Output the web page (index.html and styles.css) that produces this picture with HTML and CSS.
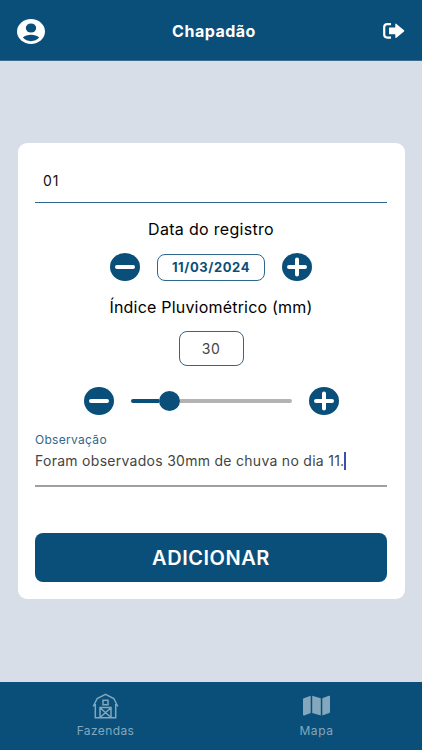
FILE: index.html
```
<!DOCTYPE html>
<html lang="pt-BR">
<head>
    <meta charset="UTF-8">
    <meta name="viewport" content="width=device-width, initial-scale=1.0">
    <title>Chapadão</title>
    <link rel="stylesheet" href="styles.css">
</head>
<body>
    <header class="header">
      <svg class="user" viewBox="0 0 27 25" preserveAspectRatio="none">
        <ellipse cx="13.5" cy="12.5" rx="13.5" ry="12.5" fill="#fff"/>
        <ellipse cx="13.5" cy="9" rx="5" ry="4.6" fill="#0a4f79"/>
        <path d="M5.6 18.6C7.6 16.6 10.5 15.7 13.5 15.7s5.9.9 7.9 2.9C19.5 20.9 16.6 22.2 13.5 22.2S7.5 20.9 5.6 18.6z" fill="#0a4f79"/>
      </svg>
      <h1 class="title">Chapadão</h1>
      <svg class="exit" viewBox="0 0 22 16">
        <path d="M8 1.1H4.2Q1.200 1.100 1.200 4.100V11.600Q1.200 14.600 4.200 14.600H8" fill="none" stroke="#fff" stroke-width="2.200"/>
        <path d="M6 5.200Q6 4.500 6.700 4.500H12.300V1.300Q12.300 0 13.400.9L21 7.200Q21.700 7.800 21 8.400L13.400 14.800Q12.300 15.600 12.300 14.300V11.200H6.700Q6 11.200 6 10.500z" fill="#fff"/>
      </svg>
    </header>

    <main class="main">
      <form class="card">
        <div class="talhao"><span>01</span></div>

        <div class="label"><span class="label-date">Data do registro</span></div>
        <div class="row row-date">
          <button type="button" class="round" aria-label="Menos">
            <svg viewBox="0 0 30 28"><path d="M7 14H23" stroke="#fff" stroke-width="4" stroke-linecap="round"/></svg>
          </button>
          <div class="date"><span>11/03/2024</span></div>
          <button type="button" class="round" aria-label="Mais">
            <svg viewBox="0 0 30 28"><path d="M7 14H23M15 6.500V21.500" stroke="#fff" stroke-width="4" stroke-linecap="round"/></svg>
          </button>
        </div>

        <div class="label"><span class="label-index">Índice Pluviométrico (mm)</span></div>
        <div class="amount"><span>30</span></div>
        <div class="row row-slider">
          <button type="button" class="round" aria-label="Menos">
            <svg viewBox="0 0 30 28"><path d="M7 14H23" stroke="#fff" stroke-width="4" stroke-linecap="round"/></svg>
          </button>
          <div class="slider">
            <div class="track-on"></div>
            <div class="thumb"></div>
            <div class="track-off"></div>
          </div>
          <button type="button" class="round" aria-label="Mais">
            <svg viewBox="0 0 30 28"><path d="M7 14H23M15 6.500V21.500" stroke="#fff" stroke-width="4" stroke-linecap="round"/></svg>
          </button>
        </div>

        <div class="obs">
          <div class="obs-label">Observação</div>
          <div class="obs-value"><span class="obs-text">Foram observados 30mm de chuva no dia 11.</span><i class="caret"></i></div>
        </div>

        <button type="button" class="submit"><span>ADICIONAR</span></button>
      </form>
    </main>

    <nav class="tabs">
      <div class="tab">
        <svg viewBox="0 0 27 26" width="27" height="26" fill="none" stroke="#83a7bd">
          <path d="M1.200 13.500L5.200 5.500L13.500 1.300L21.800 5.500L25.800 13.500M3.300 11V24.700H23.700V11" stroke-width="1.500"/>
          <path d="M11 7.300H16V11.700H11zM8 24.500V14.500H19V24.500M8 14.800L19 24.500M19 14.800L8 24.500" stroke-width="1.500"/>
        </svg>
        <span class="tab-farms">Fazendas</span>
      </div>
      <div class="tab">
        <svg viewBox="0 0 27 26" width="27" height="26" fill="#83a7bd">
          <path d="M0 6.200Q0 5.500.7 5.200L7.700 2.700V20L1.200 22.400Q0 22.800 0 21.700zM9.200 2.700L17.800 5.300V22.500L9.200 20zM19.300 5.200L25.800 2.800Q27 2.400 27 3.500V19Q27 19.700 26.300 20L19.300 22.500z"/>
        </svg>
        <span class="tab-map">Mapa</span>
      </div>
    </nav>
</body>
</html>
```

FILE: styles.css
```
* {
  box-sizing: border-box;
}
body {
  margin: 0;
  height: 750px;
  display: flex;
  flex-direction: column;
  background: #d8dee7;
  font-family: Inter, "Liberation Sans", sans-serif;
  color: #111;
}
svg {
  display: block;
}
span {
  white-space: nowrap;
}
button {
  border: none;
  padding: 0;
  font-family: inherit;
}

/* header */
.header {
  height: 61px;
  padding: 2px 17px 0 17px;
  display: flex;
  align-items: center;
  justify-content: space-between;
  background: #0a4f79;
  border-bottom: 1px solid #3a6c8e;
}
.user {
  width: 28px;
  height: 25px;
}
.title {
  margin: 0;
  font-size: 16px;
  font-weight: 700;
  letter-spacing: 0.5px;
  color: #fff;
}
.exit {
  width: 22px;
  height: 16px;
}

/* card */
.main {
  flex: 1;
  padding: 82px 17.5px 0;
}
.card {
  height: 456px;
  padding: 0 17.5px;
  border-radius: 9px;
  background: #fff;
}
.talhao {
  height: 60px;
  padding: 16px 8px 0;
  border-bottom: 1px solid #2f688d;
  display: flex;
  align-items: center;
  font-size: 14px;
  letter-spacing: 0.8px;
}
.label {
  display: flex;
  justify-content: center;
  padding-top: 16px;
  font-size: 16px;
  line-height: 20px;
  color: #000;
}
.label-date {
  letter-spacing: 0.3px;
}
.label-index {
  letter-spacing: 0.2px;
}
.row {
  display: flex;
  align-items: center;
  justify-content: center;
}
.row-date {
  height: 29px;
  gap: 17px;
  margin: 13.5px 0 -1px;
}
.round {
  width: 30px;
  height: 28px;
  border-radius: 50%;
  background: #0a4f79;
}
.date {
  width: 108px;
  height: 27px;
  border: 1px solid #2f688d;
  border-radius: 8px;
  display: flex;
  align-items: center;
  justify-content: center;
  font-size: 13px;
  font-weight: 700;
  letter-spacing: 0.6px;
  color: #0a4f79;
}
.amount {
  width: 65px;
  height: 35px;
  margin: 14px auto 0;
  border: 1px solid #2f688d;
  border-radius: 8px;
  display: flex;
  align-items: center;
  justify-content: center;
  font-size: 14px;
  letter-spacing: 0.4px;
  color: #444;
}
.row-slider {
  height: 28px;
  margin-top: 21px;
  gap: 17px;
}
.slider {
  width: 161px;
  display: flex;
  align-items: center;
}
.track-on {
  width: 28px;
  height: 4px;
  border-radius: 2px 0 0 2px;
  background: #0a4f79;
}
.thumb {
  width: 21px;
  height: 20px;
  border-radius: 50%;
  background: #0a4f79;
}
.track-off {
  flex: 1;
  height: 4px;
  border-radius: 0 2px 2px 0;
  background: #b3b3b3;
}

/* observation field */
.obs {
  height: 72px;
  padding-top: 16px;
  border-bottom: 2px solid #a0a0a0;
}
.obs-label {
  font-size: 12px;
  line-height: 17px;
  letter-spacing: 0.3px;
  color: #2f688d;
}
.obs-value {
  display: flex;
  align-items: center;
  height: 20px;
  margin-top: 3px;
  font-size: 14px;
  letter-spacing: 0.28px;
  color: #444;
}
.caret {
  width: 2px;
  height: 18px;
  background: #3a50ae;
}
.submit {
  display: flex;
  align-items: center;
  justify-content: center;
  width: 100%;
  height: 49px;
  padding-top: 1px;
  margin-top: 46.5px;
  border-radius: 8px;
  background: #0a4f79;
  color: #fff;
  font-size: 20px;
  font-weight: 600;
  letter-spacing: 0.55px;
}

/* bottom tabs */
.tabs {
  height: 68px;
  display: flex;
  background: #0a4f79;
}
.tab {
  flex: 1;
  display: flex;
  flex-direction: column;
  align-items: center;
  padding-top: 11px;
  font-size: 12px;
  line-height: 16px;
  color: #83a7bd;
}
.tab span {
  margin-top: 4px;
}
.tab-farms {
  letter-spacing: 0.4px;
}
.tab-map {
  letter-spacing: 0.6px;
}
```
